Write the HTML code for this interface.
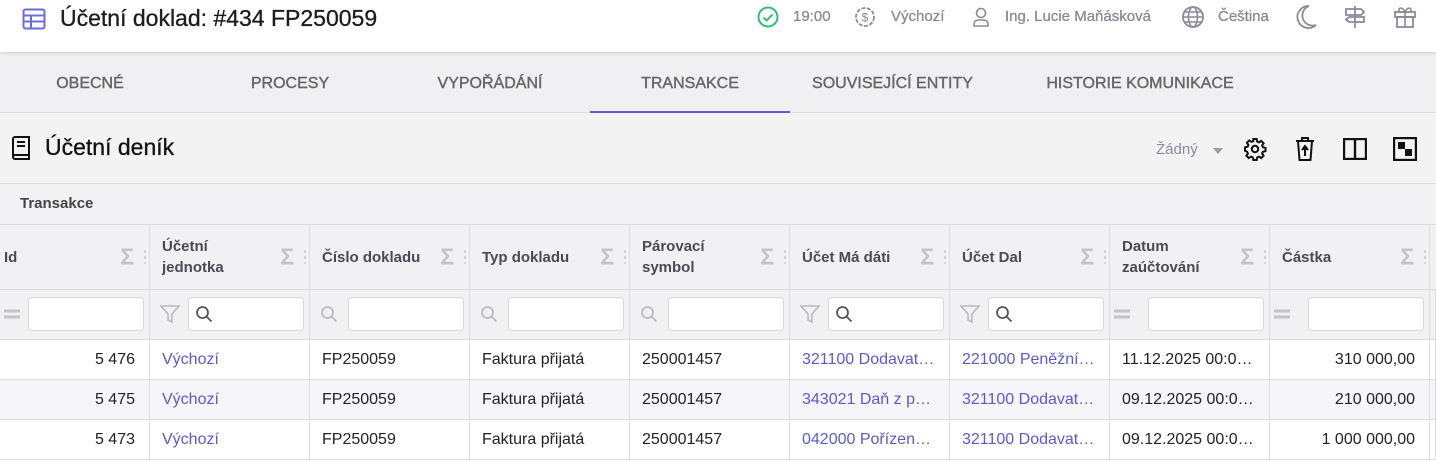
<!DOCTYPE html>
<html><head><meta charset="utf-8"><style>
*{box-sizing:border-box;margin:0;padding:0}
body{width:1436px;height:462px;overflow:hidden;background:#f3f3f5;font-family:"Liberation Sans",Arial,sans-serif;color:#222;position:relative}
.top{position:absolute;left:0;top:0;width:1436px;height:52px;background:#fff;box-shadow:0 1px 3px rgba(0,0,0,.15);z-index:2}
.title{position:absolute;left:60px;top:5px;font-size:23px;color:#1c1c1c;-webkit-text-stroke:0.3px #1c1c1c}
.tr{position:absolute;top:8px;font-size:15px;color:#8a8a98;-webkit-text-stroke:0.3px #8a8a98}
.tabs{position:absolute;top:52px;left:0;width:1436px;height:61px;background:#f0f0f2;border-bottom:1px solid #dcdcdf}
.tab{position:absolute;top:0;height:61px;line-height:63px;font-size:16px;color:#666;text-align:center;-webkit-text-stroke:0.4px #666}
.sec{position:absolute;top:113px;left:0;width:1436px;height:71px;border-bottom:1px solid #dcdcdf;background:#f3f3f4}
.sub{position:absolute;top:184px;left:0;width:1436px;height:41px;border-bottom:1px solid #dcdcdf;font-size:15px;font-weight:bold;color:#444;padding:11px 0 0 20px}
.cell{position:absolute;border-right:1px solid #dcdcdf;border-bottom:1px solid #dcdcdf}
.h{background:#f1f1f3;font-weight:bold;font-size:15px;color:#4a4a55;line-height:21px;display:flex;align-items:center;padding-left:12px}
.sig{position:absolute;right:15px;top:50%;transform:translateY(-50%);color:#c3c3c8;font-size:23px;font-weight:bold}
.dots{position:absolute;right:3px;top:50%;transform:translateY(-50%);width:2px;height:14px;background:repeating-linear-gradient(#d5d5d8 0 3px,transparent 3px 6px)}
.f{background:#f1f1f3}
.inp{position:absolute;right:6px;top:7px;width:116px;height:34px;background:#fff;border:1px solid #d8d8dc;border-radius:4px}
.d{font-size:16px;line-height:39px;padding-left:12px;white-space:nowrap;overflow:hidden;color:#222}
.a{color:#5a5ad0}
.r{text-align:right;padding-right:14px}
</style></head><body>
<div class="top">
<svg style="position:absolute;left:22px;top:8px" width="24" height="22" viewBox="0 0 24 22"><rect x="1.5" y="1.5" width="21" height="19" rx="2" fill="none" stroke="#6c6cdc" stroke-width="2"/><path d="M1.5 7.5h21M1.5 13.5h21M9 7.5v13" stroke="#6c6cdc" stroke-width="2"/></svg>
<div class="title">Účetní doklad: #434 FP250059</div>
<svg style="position:absolute;left:757px;top:6px" width="22" height="22"><circle cx="11" cy="11" r="9.5" fill="none" stroke="#2fbf71" stroke-width="2"/><path d="M6.5 11.5l3 3 6-6" fill="none" stroke="#2fbf71" stroke-width="2"/></svg>
<div class="tr" style="left:793px">19:00</div>
<svg style="position:absolute;left:853px;top:5px" width="24" height="24"><circle cx="12" cy="12" r="9" fill="none" stroke="#8a8a98" stroke-width="1.8" stroke-dasharray="4 1.5"/><text x="12" y="16.5" font-size="12" text-anchor="middle" fill="#8a8a98" font-family="Liberation Sans">$</text></svg>
<div class="tr" style="left:891px">Výchozí</div>
<svg style="position:absolute;left:971px;top:6px" width="20" height="22"><circle cx="10" cy="7" r="4.5" fill="none" stroke="#8a8a98" stroke-width="1.6"/><path d="M3 20v-2a4 4 0 0 1 4-4h6a4 4 0 0 1 4 4v2z" fill="none" stroke="#8a8a98" stroke-width="1.6"/></svg>
<div class="tr" style="left:1005px">Ing. Lucie Maňásková</div>
<svg style="position:absolute;left:1181px;top:5px" width="24" height="24"><circle cx="12" cy="12" r="10" fill="none" stroke="#8a8a98" stroke-width="1.8"/><ellipse cx="12" cy="12" rx="4.5" ry="10" fill="none" stroke="#8a8a98" stroke-width="1.6"/><path d="M2 12h20M4 7h16M4 17h16" stroke="#8a8a98" stroke-width="1.4"/></svg>
<div class="tr" style="left:1218px">Čeština</div>
<svg style="position:absolute;left:1294px;top:4px" width="24" height="26"><path d="M15 2a11 11 0 1 0 7 19A10 10 0 0 1 15 2z" fill="none" stroke="#8a8a98" stroke-width="1.8"/></svg>
<svg style="position:absolute;left:1342px;top:4px" width="26" height="26"><path d="M13 2v22M4 5h15l3 3-3 3H4zM7 13h15v5H7l-3-2.5z" fill="none" stroke="#8a8a98" stroke-width="1.8"/></svg>
<svg style="position:absolute;left:1392px;top:4px" width="26" height="26"><rect x="3" y="8" width="20" height="5" fill="none" stroke="#8a8a98" stroke-width="1.8"/><rect x="5" y="13" width="16" height="10" fill="none" stroke="#8a8a98" stroke-width="1.8"/><path d="M13 8v15M13 8c-2-5-7-5-6-1 0 1 3 1 6 1 3 0 6 0 6-1 1-4-4-4-6 1" fill="none" stroke="#8a8a98" stroke-width="1.6"/></svg>
</div>
<div class="tabs">
<div class="tab" style="left:0;width:180px">OBECNÉ</div>
<div class="tab" style="left:190px;width:200px">PROCESY</div>
<div class="tab" style="left:390px;width:200px">VYPOŘÁDÁNÍ</div>
<div class="tab" style="left:590px;width:200px;border-bottom:2px solid #5b5bd6">TRANSAKCE</div>
<div class="tab" style="left:790px;width:205px">SOUVISEJÍCÍ ENTITY</div>
<div class="tab" style="left:1025px;width:230px">HISTORIE KOMUNIKACE</div>
</div>
<div class="sec">
<svg style="position:absolute;left:10px;top:23px" width="22" height="24"><path d="M3 3a2 2 0 0 1 2-2h14v18H5a2 2 0 0 0 0 4h14v-4M3 3v18" fill="none" stroke="#111" stroke-width="2"/><path d="M7 6h8M7 10h8" stroke="#111" stroke-width="2"/></svg>
<div style="position:absolute;left:45px;top:21px;font-size:23px;color:#111;-webkit-text-stroke:0.3px #111">Účetní deník</div>
<div style="position:absolute;left:1156px;top:28px;font-size:15px;color:#8a8a98">Žádný</div>
<div style="position:absolute;left:1213px;top:35px;border:5px solid transparent;border-top:6px solid #9a9aa5"></div>
<svg style="position:absolute;left:1243px;top:24px" width="24" height="24" viewBox="0 0 24 24"><path d="M10.3 2h3.4l.5 2.6 1.8.8 2.2-1.5 2.4 2.4-1.5 2.2.8 1.8 2.6.5v3.4l-2.6.5-.8 1.8 1.5 2.2-2.4 2.4-2.2-1.5-1.8.8-.5 2.6h-3.4l-.5-2.6-1.8-.8-2.2 1.5-2.4-2.4 1.5-2.2-.8-1.8L2 13.7v-3.4l2.6-.5.8-1.8-1.5-2.2 2.4-2.4 2.2 1.5 1.8-.8z" fill="none" stroke="#111" stroke-width="2"/><circle cx="12" cy="12" r="3.2" fill="none" stroke="#111" stroke-width="2"/></svg>
<svg style="position:absolute;left:1294px;top:23px" width="22" height="26"><path d="M2 5h18M8 5V2h6v3M4 5l1.5 19h11L18 5" fill="none" stroke="#111" stroke-width="2"/><path d="M11 20v-9M8 14l3-4 3 4" fill="#111" stroke="#111" stroke-width="2"/></svg>
<svg style="position:absolute;left:1343px;top:25px" width="24" height="22"><rect x="1" y="1" width="22" height="20" fill="none" stroke="#111" stroke-width="2.4"/><path d="M12 1v20" stroke="#111" stroke-width="2.4"/></svg>
<svg style="position:absolute;left:1393px;top:24px" width="24" height="24"><rect x="1" y="1" width="22" height="22" fill="none" stroke="#111" stroke-width="2.4"/><rect x="5" y="5" width="7" height="7" fill="#111"/><rect x="12" y="12" width="7" height="7" fill="#111"/></svg>
</div>
<div class="sub">Transakce</div>
<div id="t"></div>
<script>
var cols=[[0,150,"Id"],[150,160,"Účetní<br>jednotka"],[310,160,"Číslo dokladu"],[470,160,"Typ dokladu"],[630,160,"Párovací<br>symbol"],[790,160,"Účet Má dáti"],[950,160,"Účet Dal"],[1110,160,"Datum<br>zaúčtování"],[1270,160,"Částka"]];
var fic=["eq","fil","srch","srch","srch","fil","fil","eq","eq"];
var rows=[["5 476","Výchozí","FP250059","Faktura přijatá","250001457","321100 Dodavatelé","221000 Peněžní prostředky","11.12.2025 00:0…","310 000,00"],
["5 475","Výchozí","FP250059","Faktura přijatá","250001457","343021 Daň z přidané","321100 Dodavatelé","09.12.2025 00:0…","210 000,00"],
["5 473","Výchozí","FP250059","Faktura přijatá","250001457","042000 Pořízení dlouhodobého","321100 Dodavatelé","09.12.2025 00:0…","1 000 000,00"]];
var h="";
var eq='<svg style="position:absolute;left:4px;top:19px" width="16" height="10"><path d="M0 2h16M0 8h16" stroke="#c3c3c8" stroke-width="3"/></svg>';
var fil='<svg style="position:absolute;left:10px;top:14px" width="20" height="20"><path d="M1 2h18l-7 8v8l-4-2v-6z" fill="none" stroke="#bbb" stroke-width="1.6"/></svg>';
var sr='<svg width="18" height="18"><circle cx="7.5" cy="7.5" r="5.5" fill="none" stroke="#bbb" stroke-width="1.8"/><path d="M11.5 11.5l5 5" stroke="#bbb" stroke-width="1.8"/></svg>';
cols.forEach(function(c,i){
var w=c[1];
h+='<div class="cell h" style="left:'+c[0]+'px;top:225px;width:'+w+'px;height:65px;'+(i==0?'padding-left:4px':'')+'">'+c[2]+'<span class="sig">Σ</span><span class="dots"></span></div>';
var ic=fic[i], inner='';
if(ic=="eq")inner=eq;
if(ic=="fil")inner=fil+'<div class="inp" style="left:38px;width:116px"><span style="position:absolute;left:6px;top:7px">'+sr.replace('#bbb','#555').replace('#bbb','#555')+'</span></div>';
if(ic=="srch")inner='<span style="position:absolute;left:10px;top:15px">'+sr+'</span>';
if(ic!="fil")inner+='<div class="inp" style="left:'+(i==0?28:38)+'px;width:116px"></div>';
h+='<div class="cell f" style="left:'+c[0]+'px;top:290px;width:'+w+'px;height:50px">'+inner+'</div>';
rows.forEach(function(r,j){
var cls="d"+((i==1||i==5||i==6)?" a":"")+((i==0||i==8)?" r":"");
h+='<div class="cell '+cls+'" style="left:'+c[0]+'px;top:'+(340+j*40)+'px;width:'+w+'px;height:40px;background:'+(j==1?'#f5f5fa':'#fff')+';'+((i==5||i==6)?'text-overflow:ellipsis;padding-right:14px':'')+'">'+r[i]+'</div>';
});
});
h+='<div class="cell h" style="left:1430px;top:225px;width:6px;height:65px"></div><div class="cell f" style="left:1430px;top:290px;width:6px;height:50px"></div>';
for(var j=0;j<3;j++)h+='<div class="cell" style="left:1430px;top:'+(340+j*40)+'px;width:6px;height:40px;background:'+(j==1?'#f5f5fa':'#fff')+'"></div>';
h+='<div style="position:absolute;left:0;top:460px;width:1436px;height:2px;background:#fff"></div>';
document.getElementById("t").innerHTML=h;
</script>
</body></html>
